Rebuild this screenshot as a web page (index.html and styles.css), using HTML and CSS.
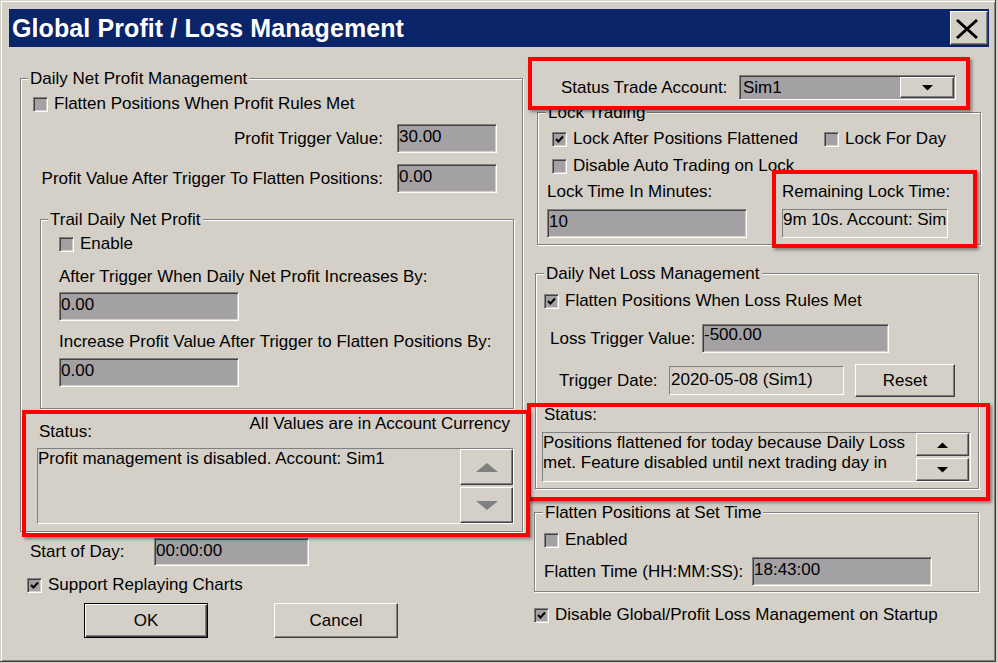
FILE: index.html
```html
<!DOCTYPE html>
<html lang="en">
<head>
<meta charset="utf-8">
<title>Global Profit / Loss Management</title>
<link rel="stylesheet" href="styles.css">
</head>
<body>
<div class="win">
  <div class="titlebar">
    <span class="title">Global Profit / Loss Management</span>
    <button class="close" aria-label="Close"><svg width="36" height="32" viewBox="0 0 36 32"><path d="M6 8 L26 26 M26 8 L6 26" stroke="#000" stroke-width="3" fill="none"/></svg></button>
  </div>
  <div class="content">
    <div class="col-left">
      <fieldset class="group g-profit">
        <legend>Daily Net Profit Management</legend>
        <div class="check c-flat-profit"><span class="cb"></span>Flatten Positions When Profit Rules Met</div>
        <div class="frow r1"><span class="flabel">Profit Trigger Value:</span><span class="input w-val">30.00</span></div>
        <div class="frow r2"><span class="flabel">Profit Value After Trigger To Flatten Positions:</span><span class="input w-val">0.00</span></div>
        <fieldset class="group g-trail">
          <legend>Trail Daily Net Profit</legend>
          <div class="check t-enable"><span class="cb"></span>Enable</div>
          <div class="tlabel t1">After Trigger When Daily Net Profit Increases By:</div>
          <div class="input t-input t2">0.00</div>
          <div class="tlabel t3">Increase Profit Value After Trigger to Flatten Positions By:</div>
          <div class="input t-input t4">0.00</div>
        </fieldset>
        <div class="status-head"><span class="st-label">Status:</span><span>All Values are in Account Currency</span></div>
        <div class="statusbox sb-left">
          <div class="sb-text">Profit management is disabled. Account: Sim1</div>
          <div class="sb-scroll">
            <span class="sbtn"><svg width="22" height="9" viewBox="0 0 22 9"><polygon points="0,9 22,9 11,0" fill="#808080"/></svg></span>
            <span class="sbtn"><svg width="22" height="9" viewBox="0 0 22 9"><polygon points="0,0 22,0 11,9" fill="#808080"/></svg></span>
          </div>
        </div>
      </fieldset>
      <div class="sod"><span class="sod-label">Start of Day:</span><span class="input sod-input">00:00:00</span></div>
      <div class="check c-replay"><span class="cb"><svg width="13" height="13" viewBox="0 0 13 13"><polyline points="3,6 5.5,8.5 10,3.5" stroke="#000" stroke-width="2" fill="none"/></svg></span>Support Replaying Charts</div>
      <div class="btns">
        <button class="btn btn-default">OK</button>
        <button class="btn">Cancel</button>
      </div>
    </div>

    <div class="col-right">
      <div class="acct">
        <span class="acct-label">Status Trade Account:</span>
        <div class="combo">
          <span class="combo-val">Sim1</span>
          <span class="combo-btn"><svg width="11" height="6" viewBox="0 0 11 6"><polygon points="0,0 11,0 5.5,5.5" fill="#000"/></svg></span>
        </div>
      </div>

      <fieldset class="group g-lock">
        <legend>Lock Trading</legend>
        <div class="lrow">
          <div class="check c-lock1"><span class="cb"><svg width="13" height="13" viewBox="0 0 13 13"><polyline points="3,6 5.5,8.5 10,3.5" stroke="#000" stroke-width="2" fill="none"/></svg></span>Lock After Positions Flattened</div>
          <div class="check"><span class="cb"></span>Lock For Day</div>
        </div>
        <div class="lrow l2">
          <div class="check"><span class="cb"></span>Disable Auto Trading on Lock</div>
        </div>
        <div class="lgrid">
          <span class="lbl">Lock Time In Minutes:</span>
          <span class="lbl">Remaining Lock Time:</span>
          <span class="input lock-input">10</span>
          <span class="rbox remain">9m 10s. Account: Sim</span>
        </div>
      </fieldset>

      <fieldset class="group g-loss">
        <legend>Daily Net Loss Management</legend>
        <div class="check c-loss"><span class="cb"><svg width="13" height="13" viewBox="0 0 13 13"><polyline points="3,6 5.5,8.5 10,3.5" stroke="#000" stroke-width="2" fill="none"/></svg></span>Flatten Positions When Loss Rules Met</div>
        <div class="lt-row"><span class="lt-label">Loss Trigger Value:</span><span class="input lt-input">-500.00</span></div>
        <div class="td-row"><span class="td-label">Trigger Date:</span><span class="rbox td-box">2020-05-08 (Sim1)</span><button class="btn reset">Reset</button></div>
        <div class="ls-label">Status:</div>
        <div class="statusbox sb-right">
          <div class="sb-text">Positions flattened for today because Daily Loss met. Feature disabled until next trading day in</div>
          <div class="sb-scroll sb-scroll-r">
            <span class="sbtn"><svg width="11" height="6" viewBox="0 0 11 6"><polygon points="0,6 11,6 5.5,0.5" fill="#000"/></svg></span>
            <span class="sbtn"><svg width="11" height="6" viewBox="0 0 11 6"><polygon points="0,0 11,0 5.5,5.5" fill="#000"/></svg></span>
          </div>
        </div>
      </fieldset>

      <fieldset class="group g-flat">
        <legend>Flatten Positions at Set Time</legend>
        <div class="check c-enabled"><span class="cb"></span>Enabled</div>
        <div class="ft-row"><span class="ft-label">Flatten Time (HH:MM:SS):</span><span class="input ft-input">18:43:00</span></div>
      </fieldset>

      <div class="check c-disable"><span class="cb"><svg width="13" height="13" viewBox="0 0 13 13"><polyline points="3,6 5.5,8.5 10,3.5" stroke="#000" stroke-width="2" fill="none"/></svg></span>Disable Global/Profit Loss Management on Startup</div>
    </div>
  </div>

  <div class="mark m1"></div>
  <div class="mark m2"></div>
  <div class="mark m3"></div>
  <div class="mark m4"></div>
</div>
</body>
</html>
```

FILE: styles.css
```css
* { box-sizing: border-box; }
html, body { margin: 0; padding: 0; }
body {
  width: 998px;
  height: 663px;
  overflow: hidden;
  background: #d4d0c8;
  font-family: "Liberation Sans", Arial, sans-serif;
  font-size: 17px;
  line-height: 20px;
  color: #000;
}
.win {
  position: relative;
  width: 996px;
  height: 662px;
  padding: 9px 0 0 9px;
  background: #d4d0c8;
  border-right: 1px solid #404040;
  border-bottom: 1px solid #404040;
  box-shadow: inset 1px 1px 0 #d4d0c8, inset 2px 2px 0 #fff, inset -1px -1px 0 #808080;
}
.titlebar {
  display: flex;
  justify-content: space-between;
  align-items: flex-start;
  width: 980px;
  height: 38px;
  background: #0a246a;
}
.title {
  color: #fff;
  font-weight: bold;
  font-size: 25px;
  line-height: 38px;
  padding-left: 3px;
  letter-spacing: 0.1px;
  white-space: nowrap;
}
.close {
  display: block;
  width: 38px;
  height: 34px;
  margin: 2px 1px 0 0;
  padding: 0;
  background: #d4d0c8;
  border: 1px solid;
  border-color: #fff #404040 #404040 #fff;
  box-shadow: inset -1px -1px 0 #808080;
}
.close svg { display: block; }

.content {
  display: flex;
  align-items: flex-start;
  padding: 23px 0 0 11px;
}
.col-left { width: 503px; flex: none; }
.col-right { width: 463px; flex: none; margin-left: 4px; }

/* group boxes */
.group {
  margin: 0;
  padding: 0;
  min-width: 0;
  border: 1px solid #808080;
  box-shadow: inset 1px 1px 0 #fff, 1px 1px 0 #fff;
}
.group > legend {
  padding: 0 2px;
  line-height: 17px;
  white-space: nowrap;
  background: #d4d0c8;
}

/* checkbox rows */
.check {
  display: flex;
  align-items: center;
  height: 20px;
  white-space: nowrap;
}
.cb {
  flex: none;
  width: 15px;
  height: 15px;
  margin-right: 6px;
  background: #a4a1a4;
  border: 1px solid;
  border-color: #808080 #fff #fff #808080;
  box-shadow: inset 1px 1px 0 #404040, inset -1px -1px 0 #d4d0c8;
}
.cb svg { display: block; }

/* inputs */
.input {
  display: block;
  height: 29px;
  padding: 2px 1px 0 1px;
  line-height: 20px;
  white-space: nowrap;
  overflow: hidden;
  background: #a4a1a4;
  border: 1px solid;
  border-color: #808080 #fff #fff #808080;
  box-shadow: inset 1px 1px 0 #404040, inset -1px -1px 0 #d4d0c8;
}
.rbox {
  display: block;
  height: 29px;
  line-height: 20px;
  white-space: nowrap;
  overflow: hidden;
  background: #d4d0c8;
  border: 1px solid;
  border-color: #808080 #fff #fff #808080;
}

/* buttons */
.btn {
  display: block;
  width: 124px;
  height: 35px;
  padding: 0;
  font: inherit;
  color: #000;
  background: #d4d0c8;
  border: 1px solid;
  border-color: #fff #404040 #404040 #fff;
  box-shadow: inset -1px -1px 0 #808080;
}
.btn-default {
  border-color: #000;
  box-shadow: inset 1px 1px 0 #fff, inset -1px -1px 0 #404040, inset -2px -2px 0 #808080;
}

/* left column: profit */
.g-profit { width: 503px; padding: 7px 0 7px 0; }
.g-profit > legend { margin-left: 7px; }
.c-flat-profit { margin-left: 12px; }
.frow {
  display: flex;
  justify-content: flex-end;
  align-items: center;
  height: 29px;
  padding-right: 25px;
}
.flabel { margin-right: 14px; white-space: nowrap; }
.w-val { width: 100px; }
.r1 { margin-top: 10px; }
.r2 { margin-top: 11px; }

.g-trail { margin: 18px 0 0 19px; width: 474px; padding: 6px 0 21px 0; }
.g-trail > legend { margin-left: 7px; }
.t-enable { margin-left: 18px; }
.tlabel { margin-left: 18px; height: 20px; white-space: nowrap; }
.t-input { margin-left: 18px; width: 180px; }
.t1 { margin-top: 13px; }
.t2 { margin-top: 5px; }
.t3 { margin-top: 11px; }
.t4 { margin-top: 6px; }

.status-head {
  display: flex;
  justify-content: space-between;
  align-items: flex-start;
  margin-top: 5px;
  padding: 0 12px 0 18px;
  white-space: nowrap;
}
.st-label { margin-top: 8px; }

.statusbox {
  display: flex;
  background: #d4d0c8;
  border: 1px solid;
  border-color: #808080 #fff #fff #808080;
}
.sb-text { flex: 1; line-height: 20px; }
.sb-scroll {
  flex: none;
  display: flex;
  flex-direction: column;
  gap: 2px;
  width: 53px;
}
.sbtn {
  flex: 1;
  display: flex;
  align-items: center;
  justify-content: center;
  background: #d4d0c8;
  border: 1px solid;
  border-color: #fff #404040 #404040 #fff;
  box-shadow: inset -1px -1px 0 #808080;
}
.sbtn svg { display: block; }
.sb-left { margin: 6px 0 0 16px; width: 477px; height: 76px; }

.sod {
  display: flex;
  align-items: center;
  height: 28px;
  margin-top: 6px;
  padding-left: 10px;
}
.sod-label { width: 124px; }
.sod-input { width: 155px; height: 28px; }
.c-replay { margin: 9px 0 0 7px; }
.btns { display: flex; gap: 66px; margin: 8px 0 0 64px; }

/* right column */
.acct {
  display: flex;
  align-items: center;
  height: 25px;
  margin-top: 5px;
  padding-left: 34px;
}
.acct-label { width: 178px; white-space: nowrap; }
.combo {
  display: flex;
  width: 217px;
  height: 25px;
  padding: 1px;
  background: #a4a1a4;
  border: 1px solid;
  border-color: #808080 #fff #fff #808080;
  box-shadow: inset 1px 1px 0 #404040;
}
.combo-val { flex: 1; padding-left: 2px; line-height: 21px; }
.combo-btn {
  flex: none;
  width: 54px;
  display: flex;
  align-items: center;
  justify-content: center;
  background: #d4d0c8;
  border: 1px solid;
  border-color: #fff #404040 #404040 #fff;
  box-shadow: inset -1px -1px 0 #808080;
}
.combo-btn svg { display: block; }

.g-lock { margin: 4px 0 0 10px; width: 444px; padding: 8px 0 6px 0; }
.g-lock > legend { margin-left: 8px; }
.lrow { display: flex; margin-left: 14px; }
.c-lock1 { width: 272px; }
.l2 { margin-top: 7px; }
.lgrid {
  display: grid;
  grid-template-columns: 235px 166px;
  grid-template-rows: 20px 29px;
  row-gap: 7px;
  margin: 6px 0 0 9px;
  white-space: nowrap;
}
.lock-input { width: 200px; }
.remain { width: 166px; padding: 0; letter-spacing: -0.05px; }

.g-loss { margin: 20px 0 0 8px; width: 444px; padding: 9px 0 6px 0; }
.g-loss > legend { margin-left: 8px; }
.c-loss { margin-left: 8px; }
.lt-row {
  display: flex;
  align-items: center;
  height: 29px;
  margin: 13px 0 0 14px;
}
.lt-label { width: 152px; white-space: nowrap; }
.lt-input { width: 187px; padding-top: 0; }
.td-row {
  display: flex;
  align-items: center;
  height: 33px;
  margin: 11px 0 0 23px;
}
.td-label { width: 110px; white-space: nowrap; }
.td-box { width: 175px; padding: 3px 0 0 1px; }
.reset { width: 100px; height: 33px; margin-left: 11px; }
.ls-label { margin: 8px 0 0 8px; height: 20px; }
.sb-right { margin: 7px 0 0 6px; width: 429px; height: 50px; }
.sb-scroll-r { margin-right: 1px; }

.g-flat { margin: 15px 0 0 7px; width: 445px; padding: 9px 0 5px 0; }
.g-flat > legend { margin-left: 8px; }
.c-enabled { margin-left: 9px; }
.ft-row {
  display: flex;
  align-items: center;
  height: 29px;
  margin: 7px 0 0 9px;
}
.ft-label { width: 208px; white-space: nowrap; }
.ft-input { width: 180px; }
.c-disable { margin: 13px 0 0 7px; }

/* red annotation rectangles */
.mark {
  position: absolute;
  border: 4px solid #f00;
  box-shadow: 2px 2px 3px rgba(0, 0, 0, 0.4);
  pointer-events: none;
}
.m1 { left: 528px; top: 57px; width: 442px; height: 53px; }
.m2 { left: 772px; top: 170px; width: 205px; height: 78px; }
.m3 { left: 527px; top: 403px; width: 463px; height: 98px; }
.m4 { left: 22px; top: 410px; width: 508px; height: 127px; }
```
